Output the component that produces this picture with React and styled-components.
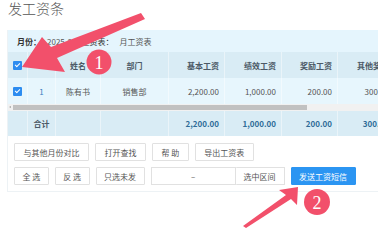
import React from "react";
import styled, { createGlobalStyle } from "styled-components";

const GlobalStyle = createGlobalStyle`
  html, body {
    margin: 0;
    padding: 0;
    background: #fff;
    overflow: hidden;
  }
  body {
    font-family: "Noto Sans CJK SC", "Noto Sans", sans-serif;
    color: #555;
  }
`;

const columns = "20px 28px 45px 68px 56px 57px 56px 57px";

const salaryCols = ["基本工资", "绩效工资", "奖励工资", "其他奖金"];
const rowValues = ["2,200.00", "1,000.00", "200.00", "300.00"];

const App = () => {
  return (
    <Page>
      <GlobalStyle />
      <Title>发工资条</Title>
      <Panel>
        <MonthBar>
          <Label>月份：</Label>
          <Value>2025-09</Value>
          <Label $light>工资表：</Label>
          <Value>月工资表</Value>
        </MonthBar>

        <Row $variant="head">
          <Cell $align="center">
            <Check />
          </Cell>
          <Cell />
          <Cell $align="center">姓名</Cell>
          <Cell $align="center">部门</Cell>
          {salaryCols.map((c) => (
            <Cell key={c} $align="right">
              {c}
            </Cell>
          ))}
        </Row>

        <Row $variant="body">
          <Cell $align="center">
            <Check />
          </Cell>
          <Cell $align="center" $blue>
            1
          </Cell>
          <Cell $align="center">陈有书</Cell>
          <Cell $align="center">销售部</Cell>
          {rowValues.map((v, i) => (
            <Cell key={i} $align="right">
              {v}
            </Cell>
          ))}
        </Row>

        <ScrollTrack>
          <ScrollArrow />
          <ScrollThumb />
        </ScrollTrack>

        <Row $variant="foot">
          <Cell />
          <Cell $align="center" $strong $dark>
            合计
          </Cell>
          <Cell />
          <Cell />
          {rowValues.map((v, i) => (
            <Cell key={i} $align="right" $strong>
              {v}
            </Cell>
          ))}
        </Row>

        <Actions>
          <BtnRow>
            <Button>与其他月份对比</Button>
            <Button>打开查找</Button>
            <Button>帮 助</Button>
            <Button>导出工资表</Button>
          </BtnRow>
          <BtnRow>
            <Button $pad={7.5}>全 选</Button>
            <Button $pad={7.5}>反 选</Button>
            <Button $pad={7.5}>只选未发</Button>
            <RangeGroup>
              <RangeInput>–</RangeInput>
              <Button $pad={8} $joined>
                选中区间
              </Button>
            </RangeGroup>
            <Button $pad={7.5} $primary>
              发送工资短信
            </Button>
          </BtnRow>
        </Actions>
      </Panel>

      <Overlay width="378" height="242" viewBox="0 0 378 242">
        <polygon
          points="22,67 42,37 51,47 141,13 145,19 57,58 65,72"
          fill="#f2506b"
        />
        <circle cx="99" cy="62" r="12.5" fill="#f2506b" />
        <text
          x="99"
          y="68.5"
          textAnchor="middle"
          fill="#fff"
          fontSize="18"
          fontFamily="'Liberation Serif', serif"
        >
          1
        </text>

        <polygon
          points="298,187 279,190 286,195 243,226 246,228 291,199 297,205"
          fill="#f2506b"
        />
        <circle cx="317" cy="202" r="13" fill="#f2506b" />
        <text
          x="317"
          y="208.5"
          textAnchor="middle"
          fill="#fff"
          fontSize="18"
          fontFamily="'Liberation Serif', serif"
        >
          2
        </text>
      </Overlay>
    </Page>
  );
};

const Page = styled.div`
  position: relative;
  width: 378px;
  height: 242px;
  padding-left: 7px;
  box-sizing: border-box;
  overflow: hidden;
`;

const Title = styled.div`
  font-size: 14px;
  line-height: 16px;
  height: 30px;
  color: #555;
  padding-left: 1px;
  font-weight: 300;
`;

const Panel = styled.div`
  width: 392px;
  border: 1px solid #edf2f5;
  border-top: none;
  box-sizing: border-box;
  background: #fff;
`;

const MonthBar = styled.div`
  display: flex;
  align-items: center;
  height: 22px;
  padding-left: 9px;
  background: #e5f5fd;
  font-size: 8px;
`;

const Label = styled.span`
  font-weight: ${(p) => (p.$light ? 400 : 700)};
  color: #333;
`;

const Value = styled.span`
  color: #555;
  margin: 0 5px 0 6px;
`;

const rowBg = {
  head: "#d9ecf5",
  body: "#e7f6fd",
  foot: "#d9ecf5",
};

const Row = styled.div`
  display: grid;
  grid-template-columns: ${columns};
  height: ${(p) => (p.$variant === "foot" ? 25 : 26)}px;
  background: ${(p) => rowBg[p.$variant]};
  font-size: 8px;
  color: ${(p) => (p.$variant === "head" ? "#4b5966" : "#555")};
  font-weight: ${(p) => (p.$variant === "head" ? 700 : 400)};
`;

const Cell = styled.div`
  display: flex;
  align-items: center;
  justify-content: ${(p) =>
    p.$align === "right" ? "flex-end" : p.$align === "center" ? "center" : "flex-start"};
  padding-right: ${(p) => (p.$align === "right" ? "5px" : "0")};
  border-right: 1px solid rgba(255, 255, 255, 0.45);
  color: ${(p) =>
    p.$dark ? "#4b5966" : p.$strong ? "#2f6c98" : p.$blue ? "#3a7fc0" : "inherit"};
  font-weight: ${(p) => (p.$strong ? 700 : "inherit")};
  white-space: nowrap;
  overflow: hidden;
`;

const Check = styled.span`
  position: relative;
  display: inline-block;
  width: 9px;
  height: 9px;
  border-radius: 1px;
  background: #2d8cf0;
  margin-right: 1px;

  &::after {
    content: "";
    position: absolute;
    left: 3px;
    top: 1px;
    width: 2px;
    height: 4px;
    border: solid #fff;
    border-width: 0 1px 1px 0;
    transform: rotate(45deg);
  }
`;

const ScrollTrack = styled.div`
  display: flex;
  align-items: stretch;
  height: 7px;
  background: #f1f1f1;
`;

const ScrollArrow = styled.div`
  width: 5px;
  position: relative;

  &::after {
    content: "";
    position: absolute;
    left: 1px;
    top: 2px;
    border-style: solid;
    border-width: 1.5px 2px 1.5px 0;
    border-color: transparent #a3a3a3 transparent transparent;
  }
`;

const ScrollThumb = styled.div`
  width: 294px;
  background: #c1c1c1;
  margin: 1px 0;
`;

const Actions = styled.div`
  display: flex;
  flex-direction: column;
  gap: 6px;
  padding: 7px 6px 6px;
`;

const BtnRow = styled.div`
  display: flex;
  gap: 6px;
`;

const Button = styled.div`
  height: 16px;
  display: flex;
  align-items: center;
  justify-content: center;
  padding: 0 ${(p) => p.$pad ?? 8.5}px;
  font-size: 8px;
  color: ${(p) => (p.$primary ? "#fff" : "#555")};
  background: ${(p) => (p.$primary ? "#2b95f2" : "#fff")};
  border: 1px solid ${(p) => (p.$primary ? "#2b95f2" : "#e1e1e1")};
  border-radius: 1px;
  white-space: nowrap;
  box-sizing: content-box;
  ${(p) => p.$joined && "border-left: none;"}
`;

const RangeGroup = styled.div`
  display: flex;
`;

const RangeInput = styled.div`
  width: 83px;
  height: 16px;
  border: 1px solid #e1e1e1;
  display: flex;
  align-items: center;
  justify-content: center;
  font-size: 8px;
  color: #555;
`;

const Overlay = styled.svg`
  position: absolute;
  left: 0;
  top: 0;
  pointer-events: none;
`;

export default App;
